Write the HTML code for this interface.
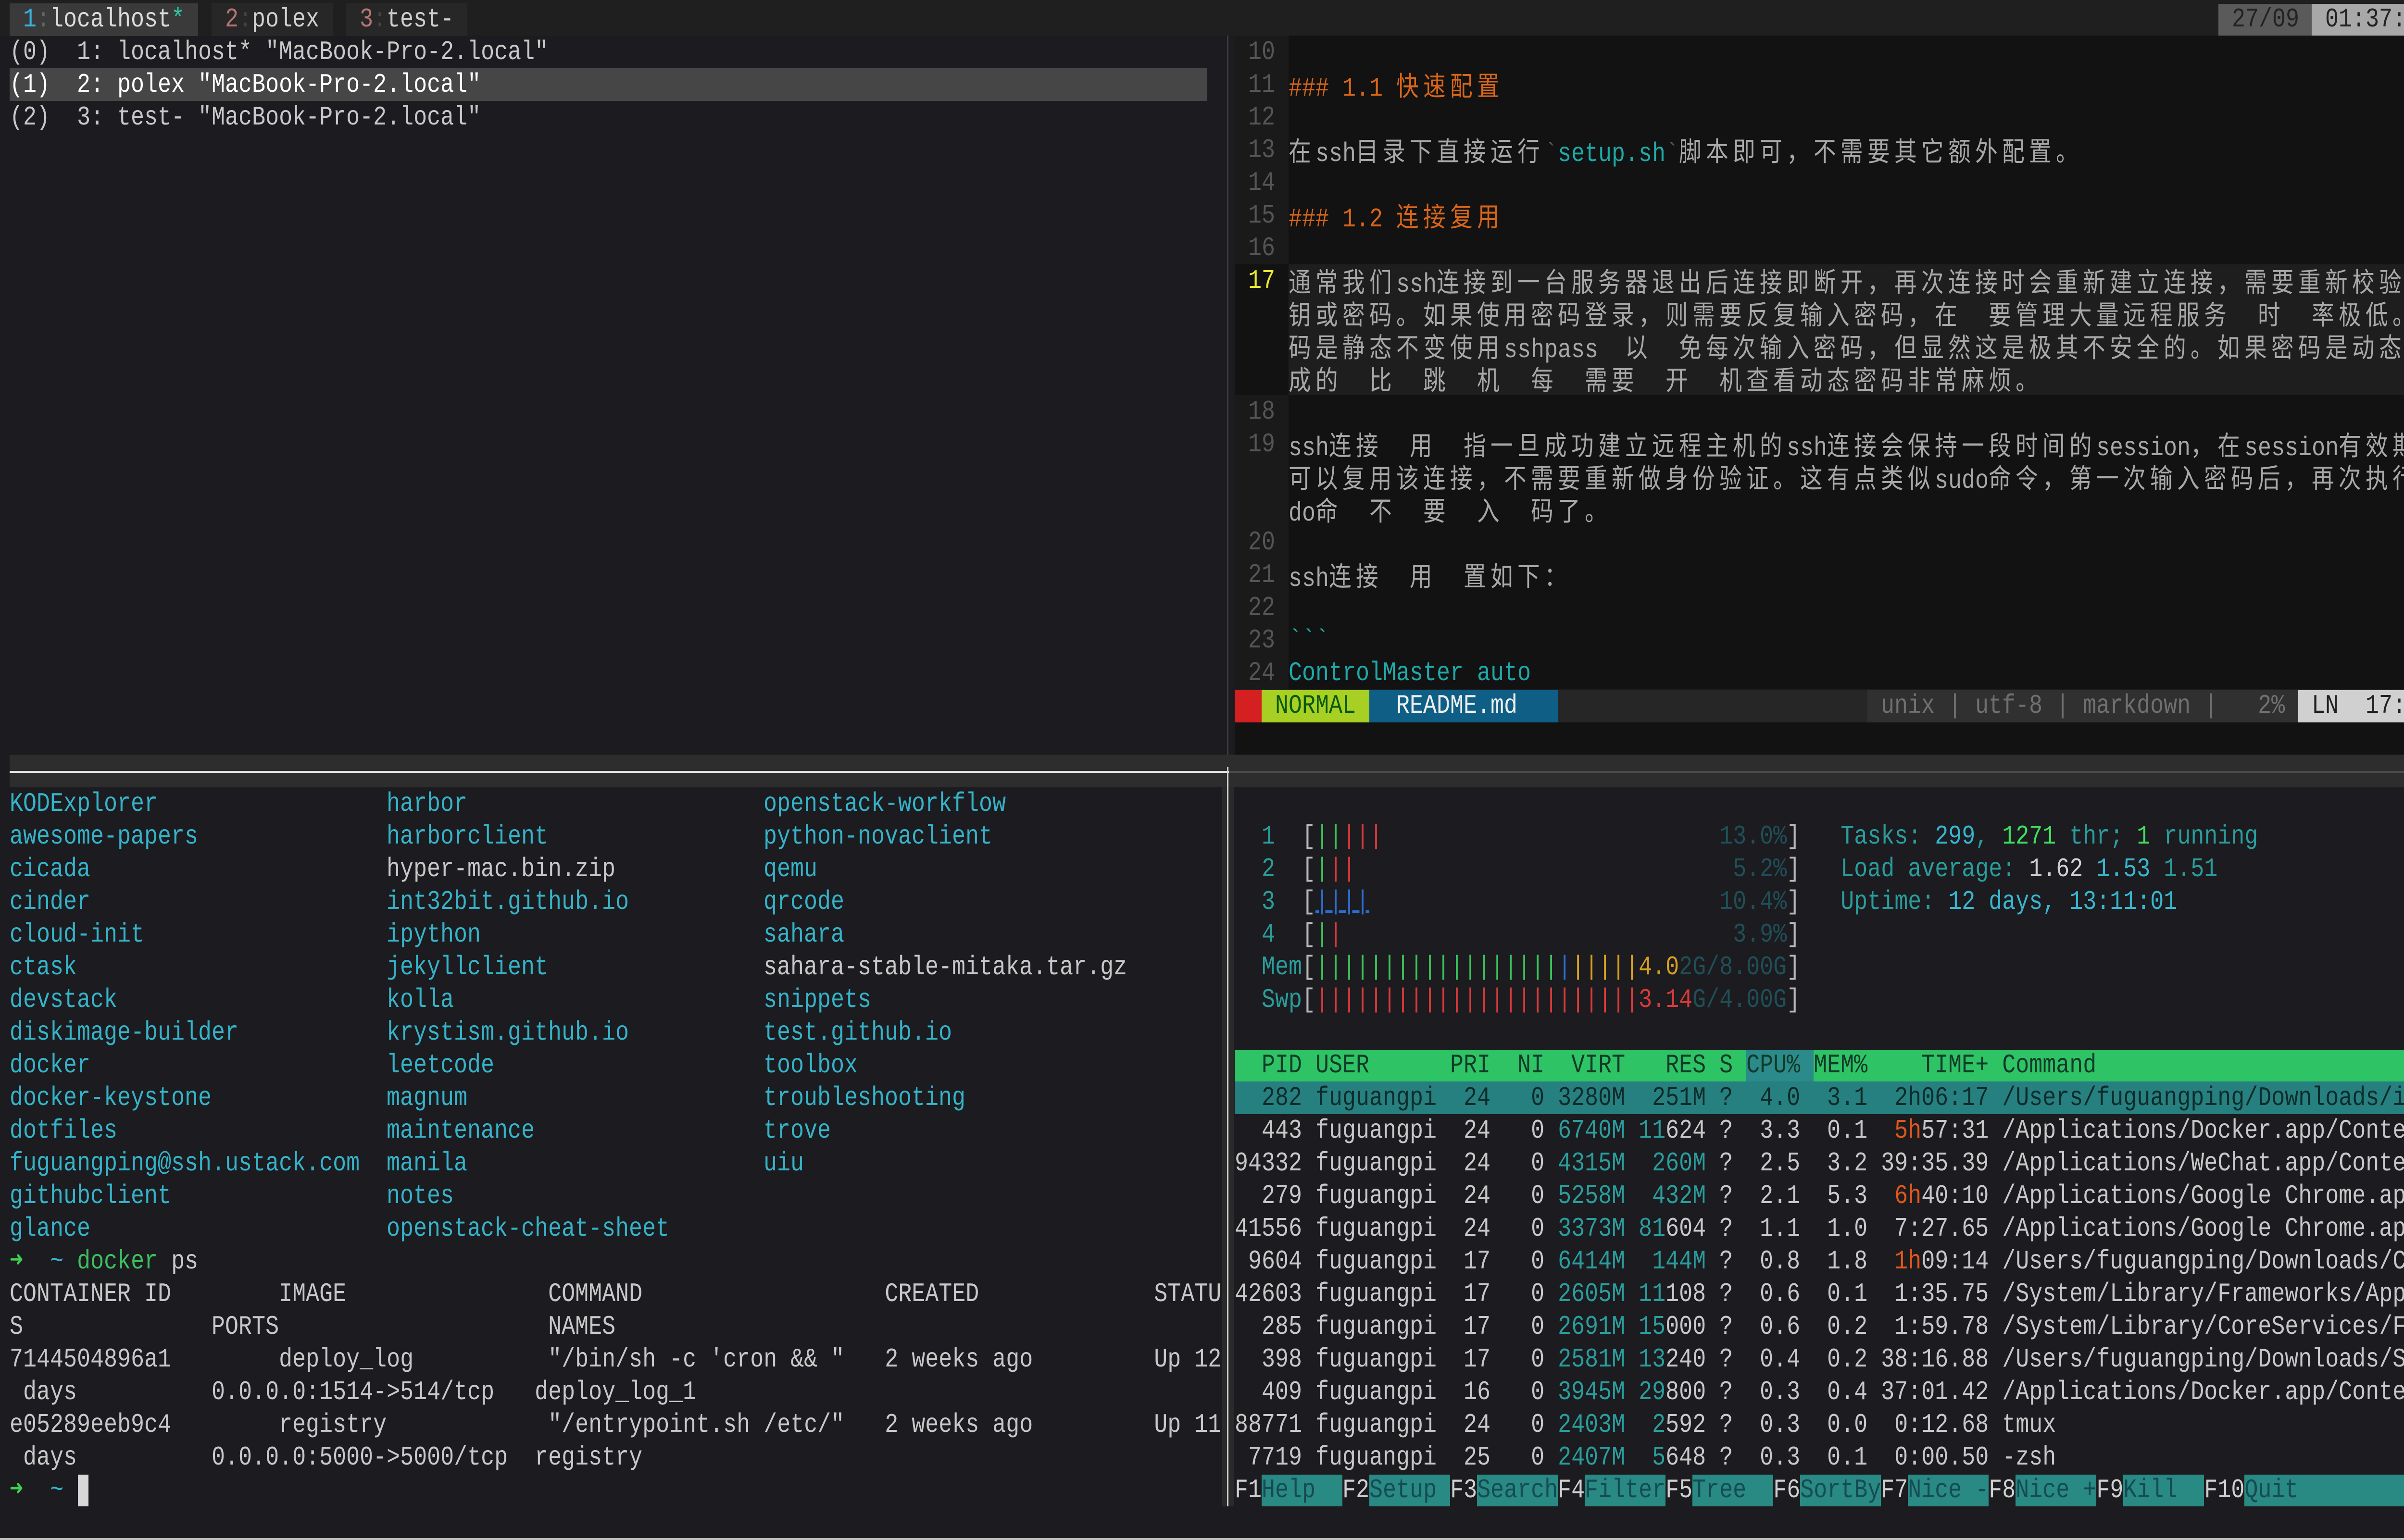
<!DOCTYPE html>
<html><head><meta charset="utf-8"><style>
html,body{margin:0;padding:0;width:5120px;height:3204px;overflow:hidden;background:#1c1b1f}
#root{position:relative;width:5120px;height:3204px;overflow:hidden;background:#1c1b1f}
.b{position:absolute}
.t{position:absolute;font-family:"Liberation Mono","DejaVu Sans Mono",monospace;font-size:56px;line-height:68px;white-space:pre;transform:scaleX(.8333);transform-origin:0 0;color:#c8c8c8;margin:0}
.c{font-family:"Noto Sans CJK SC","WenQuanYi Zen Hei",sans-serif;font-size:56px;letter-spacing:11.2px}
.g{color:#3cc35a}.rd{color:#d83a3a}.bl{color:#2d6fd0}.o{color:#d6a020}.dm{color:#1f4f57}
.tl{color:#2a9d9d}.cy{color:#38b6d0}.gr{color:#3ee060}.w{color:#d0d0d0}.or{color:#e0581c}
.br{color:#b8b8b8}.d{color:#35b3c9}.f{color:#c8c8c8}
.v{color:#a8a8a8}.h{color:#d8661a}.vt{color:#1fa9a9}.vd{color:#555}
</style></head><body><div id="root">
<div class="b" style="left:0;top:0;width:5120px;height:74px;background:#1f1f1f"></div>
<div class="b" style="left:20px;top:7px;width:392px;height:68px;background:#3a3a3a"></div>
<div class="b" style="left:440px;top:7px;width:252px;height:68px;background:#272727"></div>
<div class="b" style="left:720px;top:7px;width:252px;height:68px;background:#272727"></div>
<div class="t" style="left:20px;top:6px"> <span style="color:#37b4e0">1</span><span style="color:#666">:</span><span style="color:#dcdcdc">localhost</span><span style="color:#2cc9a0">*</span> </div>
<div class="t" style="left:440px;top:6px"> <span style="color:#b57575">2</span><span style="color:#444">:</span><span style="color:#cfcfcf">polex</span> </div>
<div class="t" style="left:720px;top:6px"> <span style="color:#b57575">3</span><span style="color:#444">:</span><span style="color:#cfcfcf">test-</span> </div>
<div class="b" style="left:4614px;top:8px;width:194px;height:67px;background:#5a5a5a"></div>
<div class="b" style="left:4808px;top:8px;width:280px;height:67px;background:#a8a8a8"></div>
<div class="t" style="left:4614px;top:6px;color:#222"> 27/09</div>
<div class="t" style="left:4808px;top:6px;color:#222"> 01:37:15</div>

<div class="b" style="left:20px;top:142px;width:2491px;height:68px;background:#464646"></div>
<div class="t" style="left:20px;top:74px">(0)  1: localhost* "MacBook-Pro-2.local"
<span style="color:#fff">(1)  2: polex "MacBook-Pro-2.local"</span>
(2)  3: test- "MacBook-Pro-2.local"</div>

<div class="b" style="left:2568px;top:74px;width:2520px;height:1360px;background:#121212"></div>
<div class="b" style="left:2568px;top:74px;width:112px;height:476px;background:#1a1a1a"></div>
<div class="b" style="left:2568px;top:822px;width:112px;height:612px;background:#1a1a1a"></div>
<div class="b" style="left:2680px;top:550px;width:2408px;height:272px;background:#1e1e1e"></div>
<div class="b" style="left:2568px;top:1502px;width:2520px;height:68px;background:#121212"></div>
<div class="t vd" style="left:2568px;top:74px"> 10
 11
 12
 13
 14
 15
 16
 <span style="color:#e8e830">17</span>



 18
 19


 20
 21
 22
 23
 24</div>
<div class="t h" style="left:2680px;top:142px">### 1.1 <span class="c">快速配置</span></div>
<div class="t v" style="left:2680px;top:278px"><span class="c">在</span>ssh<span class="c">目录下直接运行</span><span class="vd">&#96;</span><span class="vt">setup.sh</span><span class="vd">&#96;</span><span class="c">脚本即可，不需要其它额外配置。</span></div>
<div class="t h" style="left:2680px;top:414px">### 1.2 <span class="c">连接复用</span></div>
<div class="t v" style="left:2680px;top:550px"><span class="c">通常我们</span>ssh<span class="c">连接到一台服务器退出后连接即断开，再次连接时会重新建立连接，需要重新校验密</span><span class="vd">&gt;</span></div>
<div class="t v" style="left:2680px;top:618px"><span class="c">钥或密码。如果使用密码登录，则需要反复输入密码，在</span>  <span class="c">要管理大量远程服务</span>  <span class="c">时</span>  <span class="c">率极低。密</span></div>
<div class="t v" style="left:2680px;top:686px"><span class="c">码是静态不变使用</span>sshpass  <span class="c">以</span>  <span class="c">免每次输入密码，但显然这是极其不安全的。如果密码是动态生</span><span class="vd">&gt;</span></div>
<div class="t v" style="left:2680px;top:754px"><span class="c">成的</span>  <span class="c">比</span>  <span class="c">跳</span>  <span class="c">机</span>  <span class="c">每</span>  <span class="c">需要</span>  <span class="c">开</span>  <span class="c">机查看动态密码非常麻烦。</span></div>
<div class="t v" style="left:2680px;top:890px">ssh<span class="c">连接</span>  <span class="c">用</span>  <span class="c">指一旦成功建立远程主机的</span>ssh<span class="c">连接会保持一段时间的</span>session<span class="c">，在</span>session<span class="c">有效期内</span></div>
<div class="t v" style="left:2680px;top:958px"><span class="c">可以复用该连接，不需要重新做身份验证。这有点类似</span>sudo<span class="c">命令，第一次输入密码后，再次执行</span>su</div>
<div class="t v" style="left:2680px;top:1026px">do<span class="c">命</span>  <span class="c">不</span>  <span class="c">要</span>  <span class="c">入</span>  <span class="c">码了。</span></div>
<div class="t v" style="left:2680px;top:1162px">ssh<span class="c">连接</span>  <span class="c">用</span>  <span class="c">置如下：</span></div>
<div class="t vt" style="left:2680px;top:1298px">&#96;&#96;&#96;</div>
<div class="t vt" style="left:2680px;top:1366px">ControlMaster auto</div>

<div class="b" style="left:2568px;top:1436px;width:2520px;height:67px;background:#262626"></div>
<div class="b" style="left:2568px;top:1436px;width:56px;height:67px;background:#d42020"></div>
<div class="b" style="left:2624px;top:1436px;width:224px;height:67px;background:#a8d024"></div>
<div class="b" style="left:2848px;top:1436px;width:392px;height:67px;background:#0e5e85"></div>
<div class="b" style="left:3884px;top:1436px;width:896px;height:67px;background:#303030"></div>
<div class="b" style="left:4780px;top:1436px;width:308px;height:67px;background:#d0d0d0"></div>
<div class="t" style="left:2652px;top:1434px;color:#0a5a0a">NORMAL</div>
<div class="t" style="left:2904px;top:1434px;color:#eee">README.md</div>
<div class="t" style="left:3912px;top:1434px;color:#707070">unix | utf-8 | markdown |   2%</div>
<div class="t" style="left:4808px;top:1434px;color:#222">LN  17:1</div>

<div class="b" style="left:2552px;top:74px;width:3px;height:1496px;background:#3c3c3c"></div>
<div class="b" style="left:20px;top:1570px;width:5068px;height:68px;background:#2d2d2d"></div>
<div class="b" style="left:20px;top:1604px;width:2536px;height:4px;background:#e0e0e0"></div>
<div class="b" style="left:2556px;top:1604px;width:2532px;height:4px;background:#4a4a4a"></div>
<div class="b" style="left:2541px;top:1638px;width:25px;height:1496px;background:#2a2a2a"></div>
<div class="b" style="left:2552px;top:1596px;width:3px;height:1538px;background:#cfcfcf"></div>

<div class="t d" style="left:20px;top:1638px">KODExplorer
awesome-papers
cicada
cinder
cloud-init
ctask
devstack
diskimage-builder
docker
docker-keystone
dotfiles
fuguangping@ssh.ustack.com
githubclient
glance</div>
<div class="t d" style="left:804px;top:1638px">harbor
harborclient
<span class="f">hyper-mac.bin.zip</span>
int32bit.github.io
ipython
jekyllclient
kolla
krystism.github.io
leetcode
magnum
maintenance
manila
notes
openstack-cheat-sheet</div>
<div class="t d" style="left:1588px;top:1638px">openstack-workflow
python-novaclient
qemu
qrcode
sahara
<span class="f">sahara-stable-mitaka.tar.gz</span>
snippets
test.github.io
toolbox
troubleshooting
trove
uiu</div>
<div class="t" style="left:20px;top:2590px"><span style="color:#3fd050">➜</span>  <span class="cy">~</span> <span style="color:#3cc060">docker</span> ps
CONTAINER ID        IMAGE               COMMAND                  CREATED             STATU
S              PORTS                    NAMES
7144504896a1        deploy_log          "/bin/sh -c 'cron &amp;&amp; "   2 weeks ago         Up 12
 days          0.0.0.0:1514-&gt;514/tcp   deploy_log_1
e05289eeb9c4        registry            "/entrypoint.sh /etc/"   2 weeks ago         Up 11
 days          0.0.0.0:5000-&gt;5000/tcp  registry
<span style="color:#3fd050">➜</span>  <span class="cy">~</span></div>
<div class="b" style="left:162px;top:3068px;width:22px;height:66px;background:#d8d8d8"></div>

<div class="t" style="left:2568px;top:1706px"><span class="tl">  1  </span><span class="br">[</span><span class="g">||</span><span class="rd">|||</span>                         <span class="dm">13.0%</span><span class="br">]</span>   <span class="tl">Tasks: </span><span class="cy">299</span><span class="tl">, </span><span class="gr">1271</span><span class="tl"> thr; </span><span class="gr">1</span><span class="tl"> running</span>
<span class="tl">  2  </span><span class="br">[</span><span class="g">|</span><span class="rd">||</span>                            <span class="dm">5.2%</span><span class="br">]</span>   <span class="tl">Load average: </span><span class="w">1.62 </span><span class="cy">1.53 </span><span class="tl">1.51</span>
<span class="tl">  3  </span><span class="br">[</span><span class="bl" style="text-decoration:underline">||||</span>                          <span class="dm">10.4%</span><span class="br">]</span>   <span class="tl">Uptime: </span><span class="cy">12 days, 13:11:01</span>
<span class="tl">  4  </span><span class="br">[</span><span class="g">|</span><span class="rd">|</span>                             <span class="dm">3.9%</span><span class="br">]</span>
<span class="tl">  Mem</span><span class="br">[</span><span class="g">||||||||||||||||||</span><span class="bl">|</span><span class="o">|||||4.0</span><span class="dm">2G/8.00G</span><span class="br">]</span>
<span class="tl">  Swp</span><span class="br">[</span><span class="rd">||||||||||||||||||||||||3.14</span><span class="dm">G/4.00G</span><span class="br">]</span></div>

<div class="b" style="left:2568px;top:2184px;width:2520px;height:66px;background:#2ec466"></div>
<div class="b" style="left:3632px;top:2184px;width:140px;height:66px;background:#2a8b8a"></div>
<div class="b" style="left:2568px;top:2250px;width:2520px;height:68px;background:#26807f"></div>
<div class="t" style="left:2568px;top:2182px"><span style="color:#123a28">  PID USER      PRI  NI  VIRT   RES S CPU% MEM%    TIME+ Command</span>
<span style="color:#0e2b2b">  282 fuguangpi  24   0 3280M  251M ?  4.0  3.1  2h06:17 /Users/fuguangping/Downloads/iTer</span>
  443 fuguangpi  24   0 <span class="tl">6740M</span> <span class="tl">11</span>624 ?  3.3  0.1  <span class="or">5h</span>57:31 /Applications/Docker.app/Contents
94332 fuguangpi  24   0 <span class="tl">4315M</span>  <span class="tl">260M</span> ?  2.5  3.2 39:35.39 /Applications/WeChat.app/Contents
  279 fuguangpi  24   0 <span class="tl">5258M</span>  <span class="tl">432M</span> ?  2.1  5.3  <span class="or">6h</span>40:10 /Applications/Google Chrome.app/C
41556 fuguangpi  24   0 <span class="tl">3373M</span> <span class="tl">81</span>604 ?  1.1  1.0  7:27.65 /Applications/Google Chrome.app/C
 9604 fuguangpi  17   0 <span class="tl">6414M</span>  <span class="tl">144M</span> ?  0.8  1.8  <span class="or">1h</span>09:14 /Users/fuguangping/Downloads/Cybe
42603 fuguangpi  17   0 <span class="tl">2605M</span> <span class="tl">11</span>108 ?  0.6  0.1  1:35.75 /System/Library/Frameworks/AppKit
  285 fuguangpi  17   0 <span class="tl">2691M</span> <span class="tl">15</span>000 ?  0.6  0.2  1:59.78 /System/Library/CoreServices/Find
  398 fuguangpi  17   0 <span class="tl">2581M</span> <span class="tl">13</span>240 ?  0.4  0.2 38:16.88 /Users/fuguangping/Downloads/Shad
  409 fuguangpi  16   0 <span class="tl">3945M</span> <span class="tl">29</span>800 ?  0.3  0.4 37:01.42 /Applications/Docker.app/Contents
88771 fuguangpi  24   0 <span class="tl">2403M</span>  <span class="tl">2</span>592 ?  0.3  0.0  0:12.68 tmux
 7719 fuguangpi  25   0 <span class="tl">2407M</span>  <span class="tl">5</span>648 ?  0.3  0.1  0:00.50 -zsh</div>

<div class="b" style="left:2624px;top:3068px;width:168px;height:66px;background:#288a82"></div>
<div class="b" style="left:2848px;top:3068px;width:168px;height:66px;background:#288a82"></div>
<div class="b" style="left:3072px;top:3068px;width:168px;height:66px;background:#288a82"></div>
<div class="b" style="left:3296px;top:3068px;width:168px;height:66px;background:#288a82"></div>
<div class="b" style="left:3520px;top:3068px;width:168px;height:66px;background:#288a82"></div>
<div class="b" style="left:3744px;top:3068px;width:168px;height:66px;background:#288a82"></div>
<div class="b" style="left:3968px;top:3068px;width:168px;height:66px;background:#288a82"></div>
<div class="b" style="left:4192px;top:3068px;width:168px;height:66px;background:#288a82"></div>
<div class="b" style="left:4416px;top:3068px;width:168px;height:66px;background:#288a82"></div>
<div class="b" style="left:4668px;top:3068px;width:420px;height:66px;background:#288a82"></div>
<div class="t" style="left:2568px;top:3066px;color:#d0d0d0">F1<span style="color:#164a55">Help  </span>F2<span style="color:#164a55">Setup </span>F3<span style="color:#164a55">Search</span>F4<span style="color:#164a55">Filter</span>F5<span style="color:#164a55">Tree  </span>F6<span style="color:#164a55">SortBy</span>F7<span style="color:#164a55">Nice -</span>F8<span style="color:#164a55">Nice +</span>F9<span style="color:#164a55">Kill  </span>F10<span style="color:#164a55">Quit</span></div>

<div class="b" style="left:0;top:3200px;width:5120px;height:4px;background:#bdbdbd"></div>
</div></body></html>
